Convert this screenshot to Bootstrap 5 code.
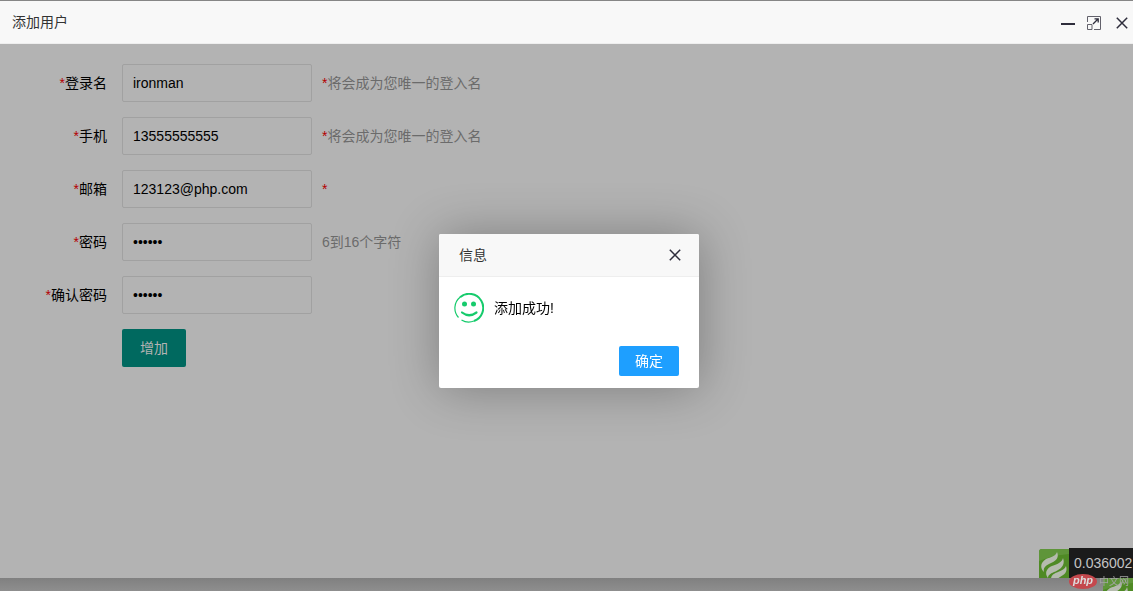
<!DOCTYPE html>
<html lang="zh-CN">
<head>
<meta charset="utf-8">
<meta name="viewport" content="width=device-width, initial-scale=1">
<title>添加用户</title>
<link href="https://cdn.jsdelivr.net/npm/bootstrap@5.3.0/dist/css/bootstrap.min.css" rel="stylesheet">
<style>
  body { font: 14px/24px "Liberation Sans", "Noto Sans CJK SC", sans-serif; color: #000; background: #8e8e8e; overflow: hidden; }
  .window-head { height: 43px; background: #f8f8f8; border-bottom: 1px solid #eee; color: #333; padding: 0 5px 0 12px; }
  .window-head h1, .dialog-head h2 { font-size: 14px; line-height: 20px; font-weight: 400; }
  .tool { border: 0; background: none; padding: 0; display: flex; color: #2e2d3c; }
  .window-tools { gap: 10px; padding-top: 2px; }
  .page { border-top: 1px solid #868686; }
  .window-body { background: #b3b3b3; padding-top: 20px; }
  .field-row { margin-bottom: 15px; }
  .field-label { width: 122px; padding-right: 15px; text-align: right; }
  .field-input { width: 190px; height: 38px; padding: 0 10px; border: 1px solid #a1a1a1; border-radius: 2px; background: #b3b3b3; color: #000; font: inherit; margin-right: 10px; }
  .field-hint { color: #6b6b6b; }
  .req { color: #b30000; }
  .btn-add { margin-left: 122px; height: 38px; padding: 0 18px; border-radius: 2px; font-size: 14px; color: #b3b3b3; background: #00695f; border: 0; }
  .overlay { padding: 31px 0 0 5px; }
  .dialog { width: 260px; background: #fff; border-radius: 2px; box-shadow: 1px 1px 50px rgba(0,0,0,.3); }
  .dialog-head { height: 43px; padding: 0 16px 0 20px; background: #f8f8f8; border-bottom: 1px solid #eee; color: #333; border-radius: 2px 2px 0 0; }
  .dialog-body { padding: 16px 15px 0; gap: 10px; }
  .dialog-foot { padding: 23px 20px 12px; }
  .btn-ok { height: 30px; padding: 0 16px; font-size: 14px; line-height: 28px; border-radius: 2px; border: 0; color: #fff; background: #1e9fff; }
  .trace { bottom: 0; right: 0; }
  .trace-time { height: 30px; padding: 3px 0 0 5px; width: 64px; background: #1b1b1b; color: #c4c4c4; white-space: nowrap; }
  .strip { height: 13px; background: linear-gradient(#808080, #8e8e8e); }
  .watermark { right: 4px; bottom: 2px; z-index: 5; gap: 2px; }
  .wm-logo { width: 28px; height: 15px; border-radius: 50%; background: #c4484d; color: #ddd; font: italic bold 11px/13px "Liberation Sans", sans-serif; text-align: center; }
  .wm-text { font-size: 10px; line-height: 15px; color: #a4a4a4; }
</style>
</head>
<body>
<svg class="position-absolute" width="0" height="0" aria-hidden="true">
  <symbol id="leaf" viewBox="0 0 30 30">
    <path fill="#4f8a25" d="M3 0h27v30H0V3a3 3 0 0 1 3-3z"/>
    <path fill="#5f953a" d="M3 0h27v5L14 7 0 12V3a3 3 0 0 1 3-3z"/>
    <path fill="#b5bbae" d="M18 3c3 7-3 10-8 12-4 2-6 4-5 8-4-4-4-9 2-13 5-2 10-3 11-7zM24 9c3 8-4 12-9 14-4 2-6 3-6 6-4-5-1-10 4-12 6-2 10-4 11-8zM27 17c2 6-2 9-6 11l-3 2h-6c0-4 4-6 7-7 4-2 7-3 8-6z"/>
  </symbol>
  <symbol id="cross" viewBox="0 0 12 12"><path d="M.8.8l10.400 10.400M11.200.8L.8 11.200" fill="none" stroke="currentColor" stroke-width="1.500"/></symbol>
</svg>

<div class="page vh-100 d-flex flex-column">
  <header class="window-head d-flex align-items-center justify-content-between flex-shrink-0">
    <h1 class="m-0">添加用户</h1>
    <div class="window-tools d-flex align-items-center">
      <button class="tool" type="button" aria-label="最小化"><svg width="16" height="14"><path d="M1 8h14" stroke="currentColor" stroke-width="2"/></svg></button>
      <button class="tool" type="button" aria-label="最大化"><svg width="16" height="14" fill="none" stroke="#62616b"><path d="M1.500 6V.5h13v13H8M1.500 8.500h4.500v5h-4.500z"/><path d="M7 8l5-5M8.500 2.800h3.700V6.500" stroke="#2e2d3c" stroke-width="1.300"/></svg></button>
      <button class="tool ms-1" type="button" aria-label="关闭"><svg width="12" height="12"><use href="#cross"/></svg></button>
    </div>
  </header>

  <main class="window-body flex-grow-1 position-relative">
    <form>
      <div class="field-row d-flex align-items-center">
        <label class="field-label" for="login"><span class="req">*</span>登录名</label>
        <input class="field-input" id="login" type="text" value="ironman">
        <span class="field-hint"><span class="req">*</span>将会成为您唯一的登入名</span>
      </div>
      <div class="field-row d-flex align-items-center">
        <label class="field-label" for="phone"><span class="req">*</span>手机</label>
        <input class="field-input" id="phone" type="text" value="13555555555">
        <span class="field-hint"><span class="req">*</span>将会成为您唯一的登入名</span>
      </div>
      <div class="field-row d-flex align-items-center">
        <label class="field-label" for="email"><span class="req">*</span>邮箱</label>
        <input class="field-input" id="email" type="text" value="123123@php.com">
        <span class="field-hint"><span class="req">*</span></span>
      </div>
      <div class="field-row d-flex align-items-center">
        <label class="field-label" for="pass"><span class="req">*</span>密码</label>
        <input class="field-input" id="pass" type="password" value="123456">
        <span class="field-hint">6到16个字符</span>
      </div>
      <div class="field-row d-flex align-items-center">
        <label class="field-label" for="repass"><span class="req">*</span>确认密码</label>
        <input class="field-input" id="repass" type="password" value="123456">
      </div>
      <button class="btn btn-add" type="button">增加</button>
    </form>
    <div class="trace position-absolute d-flex align-items-end">
      <svg width="30" height="29"><use href="#leaf" width="30" height="30"/></svg>
      <div class="trace-time">0.036002</div>
    </div>
  </main>

  <footer class="strip d-flex justify-content-end overflow-hidden flex-shrink-0">
    <svg width="30" height="30" class="flex-shrink-0"><use href="#leaf" width="30" height="30"/></svg>
  </footer>
</div>

<div class="watermark position-fixed d-flex align-items-center">
  <span class="wm-logo">php</span><span class="wm-text">中文网</span>
</div>

<div class="overlay position-fixed top-0 start-0 w-100 h-100 d-flex align-items-center justify-content-center">
  <section class="dialog" role="dialog" aria-labelledby="dialog-title">
    <div class="dialog-head d-flex align-items-center justify-content-between">
      <h2 class="m-0" id="dialog-title">信息</h2>
      <button class="tool" type="button" aria-label="关闭"><svg width="16" height="12"><use href="#cross" width="12" height="12" x="2"/></svg></button>
    </div>
    <div class="dialog-body d-flex align-items-center">
      <svg width="30" height="30" viewBox="0 0 30 30" fill="none" stroke="#16cb6c">
        <path d="M4.500 24.500A14 14 0 0 1 6 4.300" stroke-width="1.200"/>
        <path d="M6 4.300A14 14 0 1 1 20 28" stroke-width="2"/>
        <path d="M20 28A14 14 0 0 1 7.500 27" stroke-width="1.200"/>
        <path d="M8 19.500q7 5.500 14.500 0" stroke-width="2.200" stroke-linecap="round"/>
        <g fill="#16cb6c" stroke="none"><circle cx="10.500" cy="11" r="2.500"/><circle cx="19.500" cy="11" r="2.500"/></g>
      </svg>
      <span>添加成功!</span>
    </div>
    <div class="dialog-foot d-flex justify-content-end"><button class="btn btn-ok" type="button">确定</button></div>
  </section>
</div>
<script src="https://cdn.jsdelivr.net/npm/bootstrap@5.3.0/dist/js/bootstrap.bundle.min.js"></script>
</body>
</html>
